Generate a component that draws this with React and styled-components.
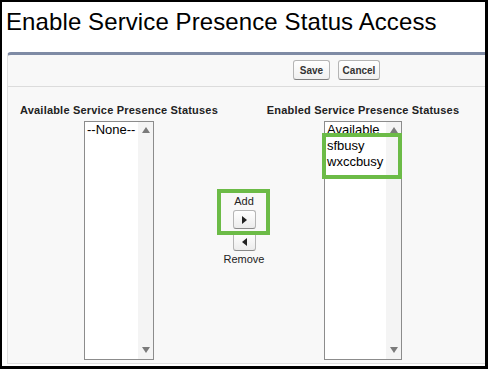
import React from 'react';
import styled, { createGlobalStyle } from 'styled-components';

const Global = createGlobalStyle`
  body {
    margin: 0;
    background: #ffffff;
    font-family: "Liberation Sans", Arial, sans-serif;
  }
`;

const Frame = styled.div`
  width: 488px;
  height: 369px;
  box-sizing: border-box;
  border: 2px solid #000;
  border-right-width: 3px;
  border-bottom-width: 3px;
  overflow: hidden;
  background: #fff;
`;

const PageTitle = styled.h1`
  margin: 0 0 16px;
  padding: 6px 0 0 4px;
  font-size: 24px;
  line-height: 28px;
  font-weight: normal;
  letter-spacing: 0.1px;
  color: #000;
  white-space: nowrap;
`;

const Panel = styled.div`
  margin-left: 5px;
  margin-right: -12px;
  background: #f8f8f8;
  border-top: 3px solid #7f8ba5;
  border-left: 1px solid #e0e0e0;
  border-bottom: 1px solid #e0e0e0;
  border-top-left-radius: 4px;
`;

const ButtonRow = styled.div`
  display: flex;
  gap: 8px;
  padding: 5px 0 6px 285px;
  border-bottom: 1px solid #dcdcdc;
`;

const Btn = styled.button`
  width: ${p => p.$w}px;
  height: 20px;
  padding: 0;
  border: 1px solid #b5b5b5;
  border-bottom-color: #7f7f7f;
  border-radius: 3px;
  background: linear-gradient(#ffffff, #f0f0f0);
  font-family: "Liberation Sans", Arial, sans-serif;
  font-size: 10px;
  font-weight: bold;
  color: #333;
`;

const Columns = styled.div`
  display: flex;
  padding: 17px 0 3px;
`;

const Column = styled.div`
  width: ${p => p.$w}px;
  display: flex;
  flex-direction: column;
  align-items: center;
`;

const ColTitle = styled.div`
  font-size: 11px;
  line-height: 13px;
  font-weight: bold;
  letter-spacing: 0.2px;
  color: #222;
  white-space: nowrap;
  margin-bottom: 4px;
`;

const ListBox = styled.div`
  position: relative;
  width: ${p => p.$w}px;
  height: 239px;
  box-sizing: border-box;
  border: 1px solid #8c8c8c;
  background: #fff;
  display: flex;
`;

const Options = styled.div`
  flex: 1;
  overflow: hidden;
  padding-left: 2px;
`;

const Option = styled.div`
  font-size: 13px;
  line-height: 16px;
  color: #000;
  white-space: nowrap;
`;

const ScrollStrip = styled.div`
  width: 15px;
  background: #f4f4f4;
  display: flex;
  flex-direction: column;
  align-items: center;
  justify-content: space-between;
  padding: 5px 0 6px;
`;

const Arrow = styled.span`
  width: 0;
  height: 0;
  border-left: 4px solid transparent;
  border-right: 4px solid transparent;
  ${p => (p.$down ? 'border-top: 6px solid #7a7a7a;' : 'border-bottom: 6px solid #7a7a7a;')}
`;

const Highlight = styled.div`
  position: absolute;
  box-sizing: border-box;
  border: 4px solid #6cbb47;
  left: ${p => p.$x}px;
  top: ${p => p.$y}px;
  width: ${p => p.$w}px;
  height: ${p => p.$h}px;
  pointer-events: none;
`;

const Middle = styled.div`
  position: relative;
  width: 28px;
  display: flex;
  flex-direction: column;
  align-items: center;
  padding-top: 91px;
`;

const MoveLabel = styled.div`
  font-size: 11px;
  line-height: 13px;
  color: #222;
  white-space: nowrap;
  margin: ${p => (p.$below ? '2px 0 0' : '0 0 2px')};
`;

const MoveBtn = styled.div`
  width: 23px;
  height: 19px;
  box-sizing: border-box;
  border: 1px solid #b5b5b5;
  border-bottom-color: #8a8a8a;
  border-radius: 3px;
  background: linear-gradient(#ffffff, #ececec);
  display: flex;
  align-items: center;
  justify-content: center;
  margin-bottom: ${p => p.$gap || 0}px;
`;

const Tri = styled.span`
  width: 0;
  height: 0;
  border-top: 4px solid transparent;
  border-bottom: 4px solid transparent;
  ${p => (p.$left ? 'border-right: 5px solid #222;' : 'border-left: 5px solid #222;')}
`;

const SelectList = ({ width, items, children }) => (
  <ListBox $w={width}>
    <Options>
      {items.map(t => (
        <Option key={t}>{t}</Option>
      ))}
    </Options>
    <ScrollStrip>
      <Arrow />
      <Arrow $down />
    </ScrollStrip>
    {children}
  </ListBox>
);

export default function App() {
  return (
    <>
      <Global />
      <Frame>
        <PageTitle>Enable Service Presence Status Access</PageTitle>
        <Panel>
          <ButtonRow>
            <Btn $w={37}>Save</Btn>
            <Btn $w={42}>Cancel</Btn>
          </ButtonRow>
          <Columns>
            <Column $w={222}>
              <ColTitle>Available Service Presence Statuses</ColTitle>
              <SelectList width={70} items={['--None--']} />
            </Column>
            <Middle>
              <MoveLabel>Add</MoveLabel>
              <MoveBtn $gap={3}>
                <Tri />
              </MoveBtn>
              <MoveBtn>
                <Tri $left />
              </MoveBtn>
              <MoveLabel $below>Remove</MoveLabel>
              <Highlight $x={-13} $y={85} $w={53} $h={46} />
            </Middle>
            <Column $w={210}>
              <ColTitle>Enabled Service Presence Statuses</ColTitle>
              <SelectList width={78} items={['Available', 'sfbusy', 'wxccbusy']}>
                <Highlight $x={-3} $y={11} $w={80} $h={46} />
              </SelectList>
            </Column>
          </Columns>
        </Panel>
      </Frame>
    </>
  );
}
